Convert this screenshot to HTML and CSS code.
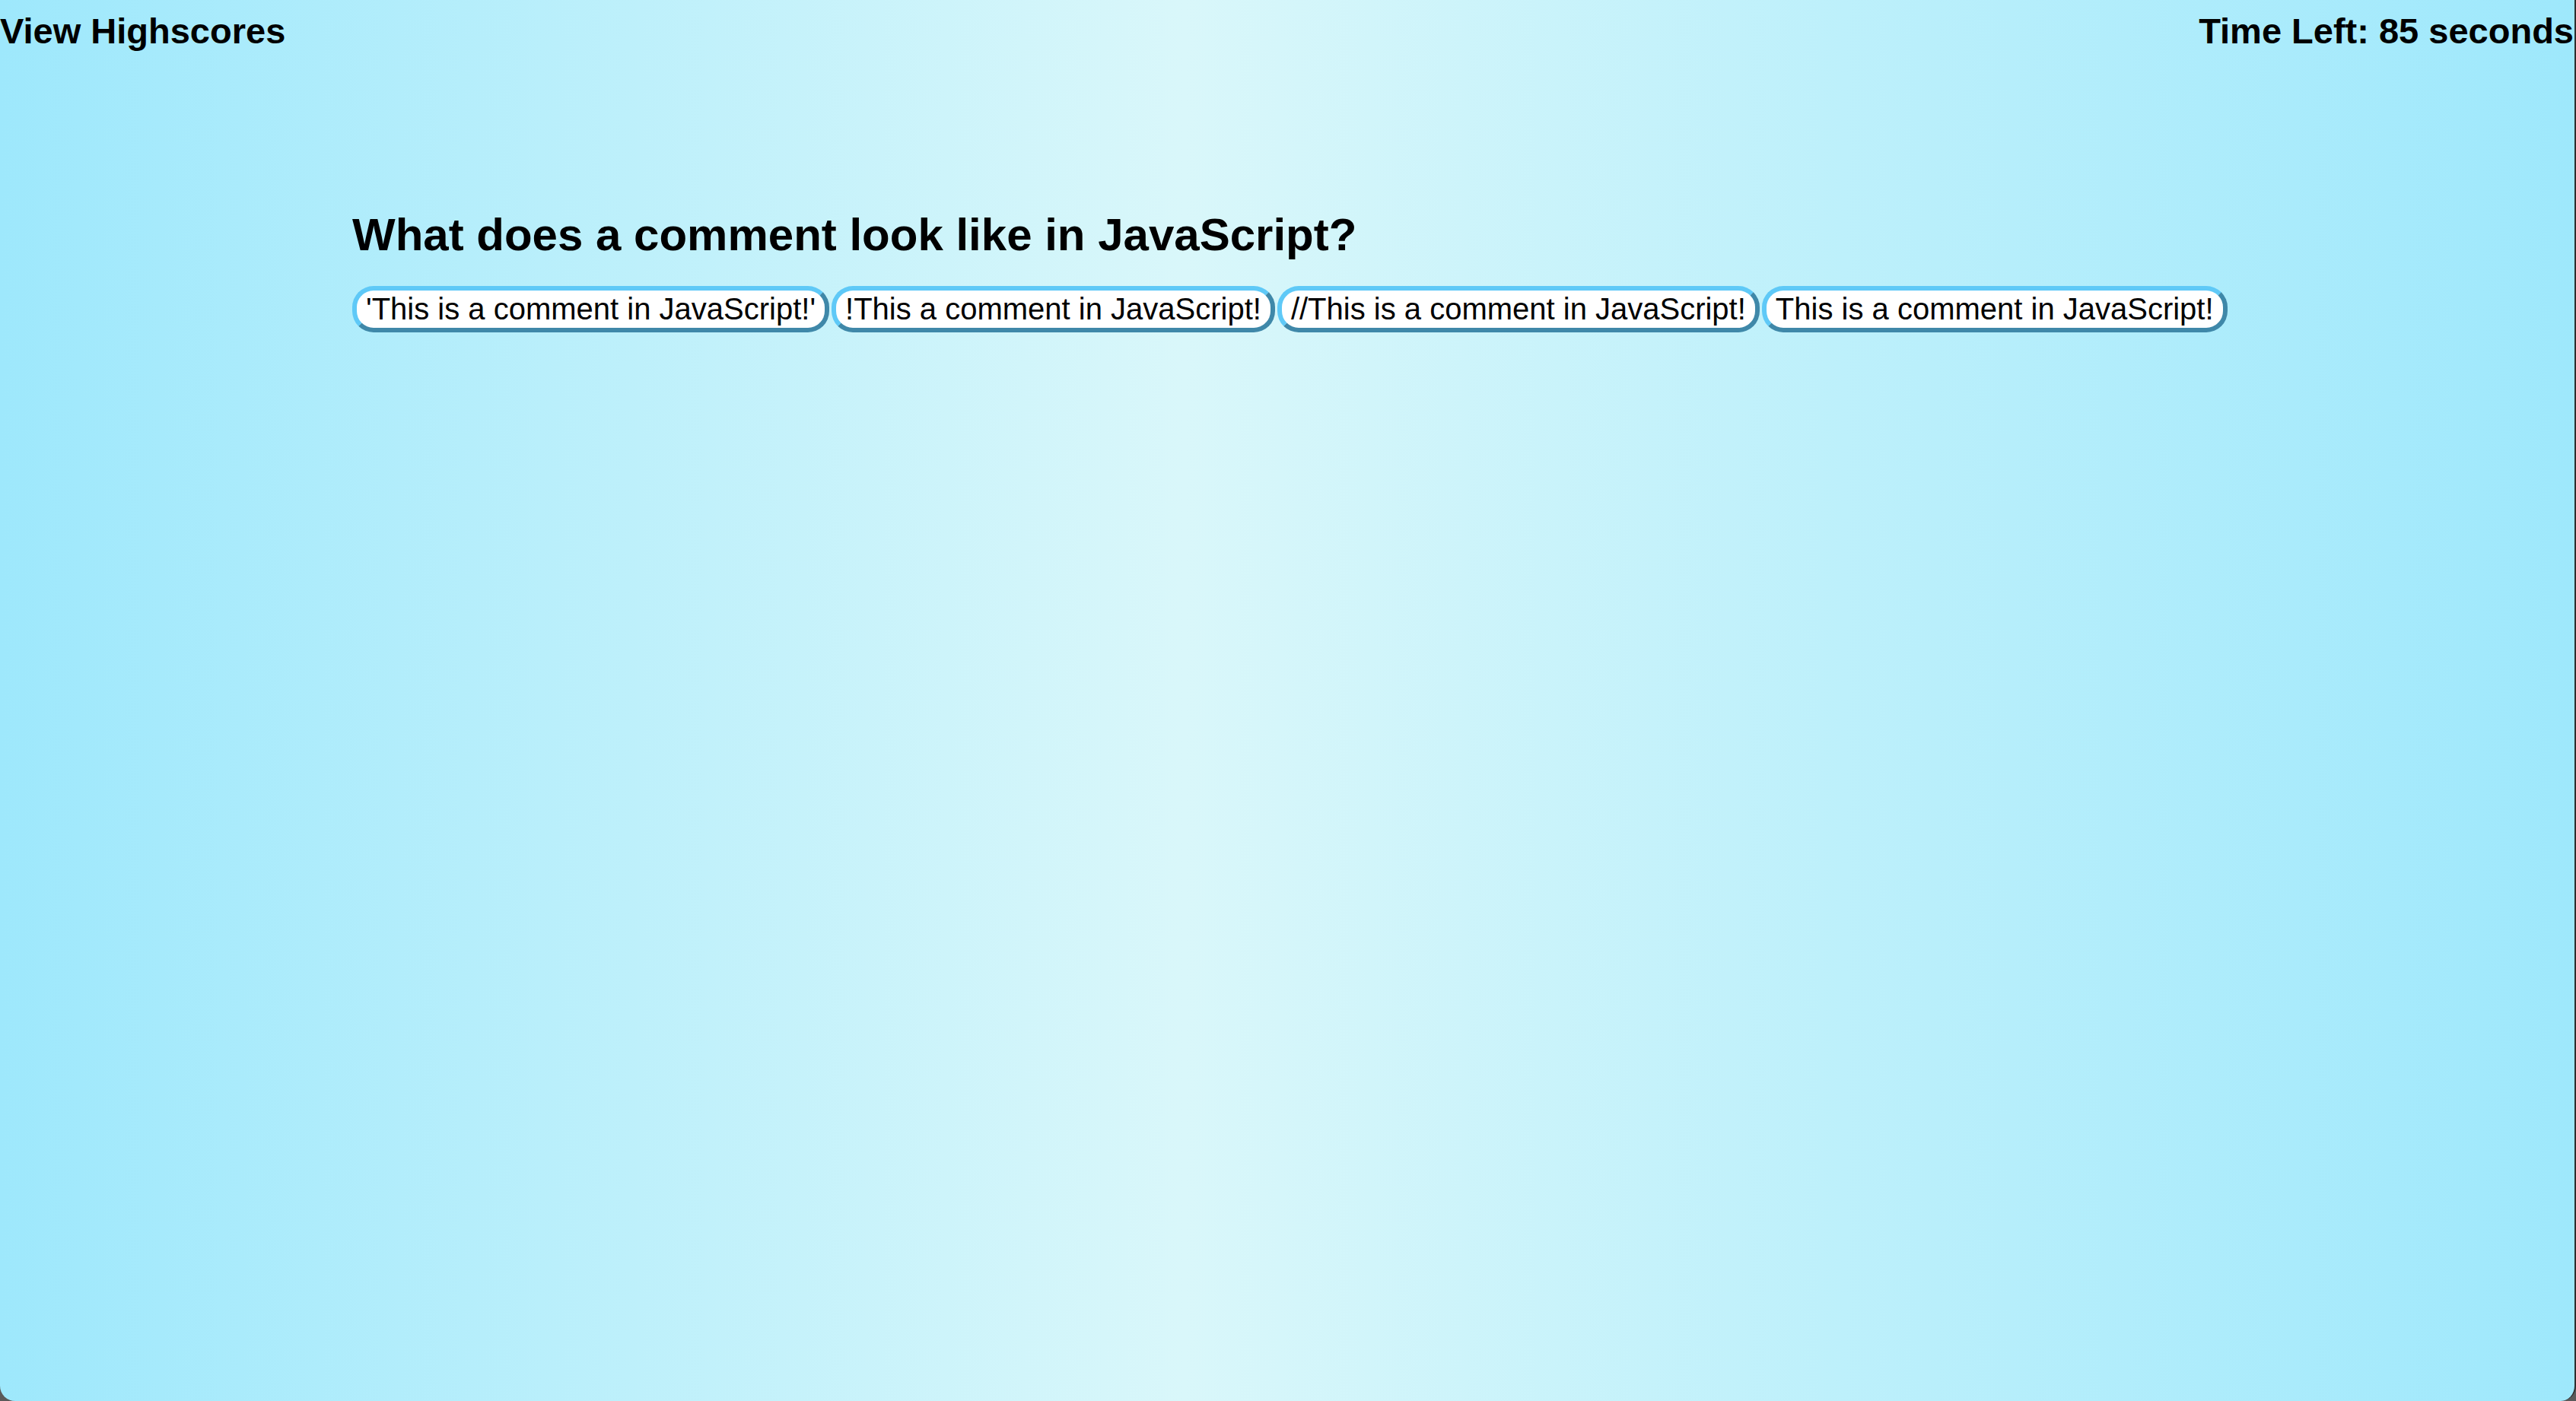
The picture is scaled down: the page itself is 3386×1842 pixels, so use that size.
FILE: index.html
```html
<!DOCTYPE html>
<html lang="en">
<head>
<meta charset="utf-8">
<title>Code Quiz</title>
<link rel="stylesheet" href="styles.css">
</head>
<body>
<div class="window">
  <header class="topbar">
    <a class="highscores">View Highscores</a>
    <div class="timer">Time Left: 85 seconds</div>
  </header>
  <main class="quiz">
    <h1 class="question">What does a comment look like in JavaScript?</h1>
    <div class="choices">
      <button class="choice">'This is a comment in JavaScript!'</button>
      <button class="choice">!This a comment in JavaScript!</button>
      <button class="choice">//This is a comment in JavaScript!</button>
      <button class="choice">This is a comment in JavaScript!</button>
    </div>
  </main>
</div>
</body>
</html>
```
FILE: styles.css
```css
html {
  background: #5a5a5a;
}
body {
  margin: 0;
  font-family: "Liberation Sans", Arial, Helvetica, sans-serif;
  color: #000;
}
.window {
  box-sizing: border-box;
  min-height: 100vh;
  border-right: 2px solid #2e2e2e;
  border-radius: 0 0 20px 20px;
  background: linear-gradient(to right, #9ee8fc 0%, #d9f7fa 46%, #9ee8fc 100%);
  overflow: hidden;
}
.topbar {
  display: flex;
  justify-content: space-between;
  align-items: flex-start;
  padding: 13px 1px 0 0;
  font-size: 47px;
  font-weight: bold;
  line-height: 55px;
}
.highscores {
  color: #000;
  text-decoration: none;
}
.quiz {
  width: 2458px;
  margin: 0 auto;
}
.question {
  margin: 205px 0 0 0;
  font-size: 60px;
  font-weight: bold;
  line-height: 71px;
}
.choices {
  display: flex;
  gap: 3px;
  margin-top: 32px;
}
.choice {
  flex: 0 0 auto;
  white-space: nowrap;
  font-family: "Liberation Sans", Arial, Helvetica, sans-serif;
  font-size: 40px;
  line-height: 45px;
  padding: 2px 12px;
  background: #fff;
  color: #000;
  border: 6px solid;
  border-color: #5fc9f7 #3f88a9 #3f88a9 #5fc9f7;
  border-radius: 28px;
  cursor: pointer;
}
```
